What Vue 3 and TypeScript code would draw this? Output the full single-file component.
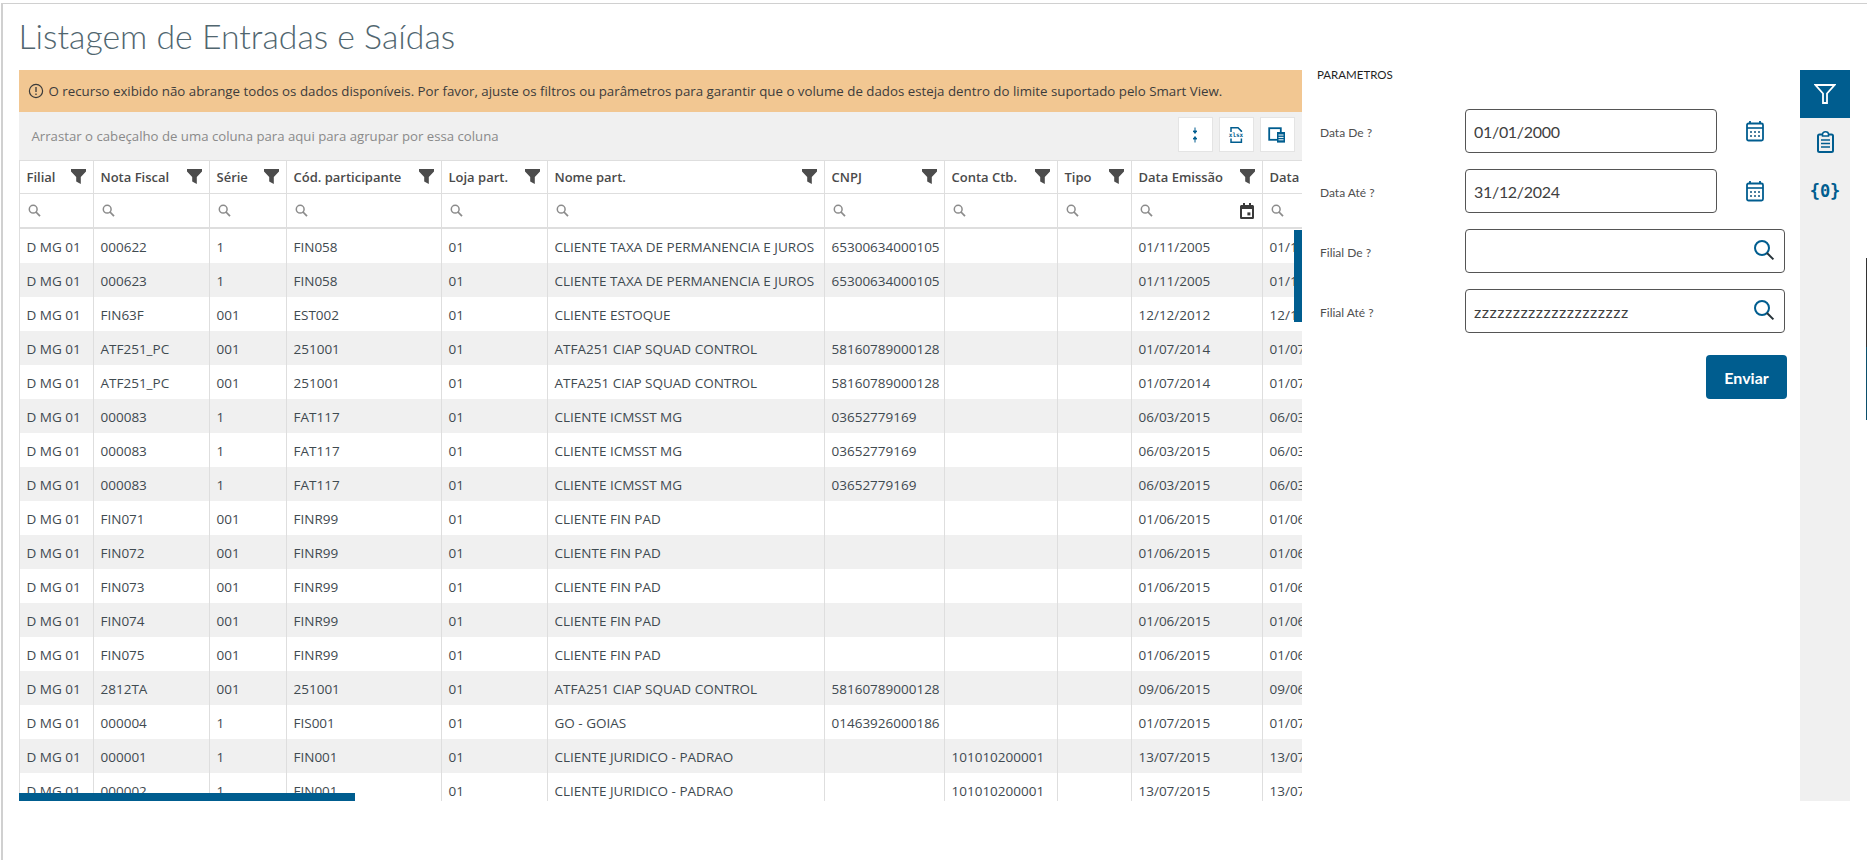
<script setup lang="ts">
interface Col { label: string; width: number; date?: boolean }
const cols: Col[] = [
  { label: 'Filial', width: 75 },
  { label: 'Nota Fiscal', width: 116 },
  { label: 'Série', width: 77 },
  { label: 'Cód. participante', width: 155 },
  { label: 'Loja part.', width: 106 },
  { label: 'Nome part.', width: 277 },
  { label: 'CNPJ', width: 120 },
  { label: 'Conta Ctb.', width: 113 },
  { label: 'Tipo', width: 74 },
  { label: 'Data Emissão', width: 131, date: true },
  { label: 'Data Digitação', width: 131 }
]
const tableWidth = cols.reduce((s, c) => s + c.width, 0)

function row(nf: string, serie: string, cod: string, nome: string, cnpj: string, conta: string, data: string): string[] {
  return ['D MG 01', nf, serie, cod, '01', nome, cnpj, conta, '', data, data]
}
const taxa = 'CLIENTE TAXA DE PERMANENCIA E JUROS'
const ciap = 'ATFA251 CIAP SQUAD CONTROL'
const rows: string[][] = [
  row('000622', '1', 'FIN058', taxa, '65300634000105', '', '01/11/2005'),
  row('000623', '1', 'FIN058', taxa, '65300634000105', '', '01/11/2005'),
  row('FIN63F', '001', 'EST002', 'CLIENTE ESTOQUE', '', '', '12/12/2012'),
  row('ATF251_PC', '001', '251001', ciap, '58160789000128', '', '01/07/2014'),
  row('ATF251_PC', '001', '251001', ciap, '58160789000128', '', '01/07/2014'),
  row('000083', '1', 'FAT117', 'CLIENTE ICMSST MG', '03652779169', '', '06/03/2015'),
  row('000083', '1', 'FAT117', 'CLIENTE ICMSST MG', '03652779169', '', '06/03/2015'),
  row('000083', '1', 'FAT117', 'CLIENTE ICMSST MG', '03652779169', '', '06/03/2015'),
  row('FIN071', '001', 'FINR99', 'CLIENTE FIN PAD', '', '', '01/06/2015'),
  row('FIN072', '001', 'FINR99', 'CLIENTE FIN PAD', '', '', '01/06/2015'),
  row('FIN073', '001', 'FINR99', 'CLIENTE FIN PAD', '', '', '01/06/2015'),
  row('FIN074', '001', 'FINR99', 'CLIENTE FIN PAD', '', '', '01/06/2015'),
  row('FIN075', '001', 'FINR99', 'CLIENTE FIN PAD', '', '', '01/06/2015'),
  row('2812TA', '001', '251001', ciap, '58160789000128', '', '09/06/2015'),
  row('000004', '1', 'FIS001', 'GO - GOIAS', '01463926000186', '', '01/07/2015'),
  row('000001', '1', 'FIN001', 'CLIENTE JURIDICO - PADRAO', '', '101010200001', '13/07/2015'),
  row('000002', '1', 'FIN001', 'CLIENTE JURIDICO - PADRAO', '', '101010200001', '13/07/2015')
]
const params = [
  { label: 'Data De ?', value: '01/01/2000', kind: 'date' },
  { label: 'Data Até ?', value: '31/12/2024', kind: 'date' },
  { label: 'Filial De ?', value: '', kind: 'search' },
  { label: 'Filial Até ?', value: 'zzzzzzzzzzzzzzzzzzzz', kind: 'search' }
]
</script>

<template>
  <div class="page">
    <main class="content">
      <h1 class="title">Listagem de Entradas e Saídas</h1>
      <div class="banner">
        <svg class="info" viewBox="0 0 16 16" width="16" height="16">
          <circle cx="8" cy="8" r="6.6" fill="none" stroke="#3a3a3a" stroke-width="1.2" />
          <path d="M8 4v5M8 10.6v1.4" stroke="#3a3a3a" stroke-width="1.3" fill="none" />
        </svg>
        <span>O recurso exibido não abrange todos os dados disponíveis. Por favor, ajuste os filtros ou parâmetros para garantir que o volume de dados esteja dentro do limite suportado pelo Smart View.</span>
      </div>
      <div class="groupbar">
        <span class="grouphint">Arrastar o cabeçalho de uma coluna para aqui para agrupar por essa coluna</span>
        <div class="tools">
          <button class="tool" type="button" aria-label="Compactar">
            <svg viewBox="0 0 16 18" width="16" height="18">
              <path d="M8 1.500v4M6.200 5 8 7.400 9.800 5ZM8 16.500v-4M6.200 13 8 10.600 9.800 13Z" fill="#005d8f" stroke="#005d8f" stroke-width="1" />
            </svg>
          </button>
          <button class="tool" type="button" aria-label="Exportar">
            <svg viewBox="0 0 18 18" width="18" height="18">
              <path d="M4 6V1.700h7l3.400 3.400V6M4 12.500v3.800h10.400v-3.800" fill="none" stroke="#005d8f" stroke-width="1.500" />
              <text x="9" y="11.400" text-anchor="middle" class="xlsx">xlsx</text>
            </svg>
          </button>
          <button class="tool" type="button" aria-label="Colunas">
            <svg viewBox="0 0 18 18" width="18" height="18">
              <rect x="1.200" y="2.200" width="11.600" height="11.600" fill="none" stroke="#005d8f" stroke-width="1.800" />
              <rect x="9" y="6" width="8" height="10.600" fill="#005d8f" />
              <path d="M10.500 9h5M10.500 11.400h5M10.500 13.800h5" stroke="#fff" stroke-width="1" />
            </svg>
          </button>
        </div>
      </div>
      <div class="grid">
        <table class="table" :style="{ width: tableWidth + 'px' }">
          <colgroup>
            <col v-for="c in cols" :key="c.label" :style="{ width: c.width + 'px' }" />
          </colgroup>
          <thead>
            <tr class="head">
              <th v-for="c in cols" :key="c.label">
                <div class="headcell">
                  <span class="headlabel">{{ c.label }}</span>
                  <svg class="funnel" viewBox="0 0 15 15" width="15" height="15">
                    <path d="M0 0h15v2.600L9.800 8v7L5.200 12.600V8L0 2.600Z" fill="#4c4c4c" />
                  </svg>
                </div>
              </th>
            </tr>
            <tr class="filters">
              <th v-for="c in cols" :key="c.label">
                <div class="filtercell">
                  <svg viewBox="0 0 13 13" width="13" height="13">
                    <circle cx="5.200" cy="5.200" r="3.900" fill="none" stroke="#8b8b8b" stroke-width="1.500" />
                    <path d="m8 8 4 4.200" stroke="#8b8b8b" stroke-width="1.800" fill="none" />
                  </svg>
                  <svg v-if="c.date" class="eventicon" viewBox="0 0 14 16" width="14" height="16">
                    <path d="M3 0h2v2h4V0h2v2h1.400c.9 0 1.600.7 1.600 1.600v10.800c0 .9-.7 1.600-1.600 1.600H1.600C.7 16 0 15.300 0 14.400V3.600C0 2.700.7 2 1.600 2H3ZM2 6v8h10V6Z" fill="#3a3a3a" />
                    <rect x="7.400" y="9.400" width="3" height="3" fill="#3a3a3a" />
                  </svg>
                </div>
              </th>
            </tr>
          </thead>
          <tbody>
            <tr v-for="(r, i) in rows" :key="i" class="datarow">
              <td v-for="(v, j) in r" :key="j">{{ v }}</td>
            </tr>
          </tbody>
        </table>
        <div class="vthumb"></div>
        <div class="hthumb"></div>
      </div>
    </main>

    <section class="params">
      <h2 class="paramstitle">PARAMETROS</h2>
      <form class="form" @submit.prevent>
        <div v-for="p in params" :key="p.label" class="field">
          <label class="fieldlabel">{{ p.label }}</label>
          <div class="control" :class="p.kind">
            <input class="input" type="text" :value="p.value" />
            <svg v-if="p.kind === 'search'" class="lens" viewBox="0 0 22 22" width="22" height="22">
              <circle cx="9" cy="9" r="7" fill="none" stroke="#005d8f" stroke-width="2" />
              <path d="m14 14 6.400 6.400" stroke="#263238" stroke-width="2" fill="none" />
            </svg>
          </div>
          <svg v-if="p.kind === 'date'" class="cal" viewBox="0 0 18 22" width="18" height="22">
            <path d="M4 1v3M14 1v3" stroke="#005d8f" stroke-width="1.800" />
            <rect x="1" y="3.500" width="16" height="17" rx="1.500" fill="none" stroke="#005d8f" stroke-width="1.800" />
            <path d="M1 8h16" stroke="#005d8f" stroke-width="1.600" />
            <path d="M4 11h2v2H4ZM8 11h2v2H8ZM12 11h2v2h-2ZM4 15h2v2H4ZM8 15h2v2H8ZM12 15h2v2h-2Z" fill="#4a7fa0" />
          </svg>
        </div>
        <button class="send" type="submit">Enviar</button>
      </form>
    </section>

    <nav class="rail">
      <div class="railitem active">
        <svg viewBox="0 0 22 20" width="22" height="20">
          <path d="M1.500 1h19L13 9.500V19H9V9.500Z" fill="none" stroke="#fff" stroke-width="1.800" />
        </svg>
      </div>
      <div class="railitem">
        <svg viewBox="0 0 17 22" width="17" height="22">
          <rect x="1" y="3.500" width="15" height="17.500" rx="1.500" fill="none" stroke="#005d8f" stroke-width="2" />
          <path d="M5.500 3.500c0-1.500 1-2.700 3-2.700s3 1.200 3 2.700v1.500h-6Z" fill="#fff" stroke="#005d8f" stroke-width="1.500" />
          <path d="M4 9h9M4 12.500h9M4 16h9" stroke="#005d8f" stroke-width="1.500" />
        </svg>
      </div>
      <div class="railitem code">{0}</div>
    </nav>

    <div class="edge"></div>
  </div>
</template>

<style>
html, body { margin: 0; background: #fff; }
</style>

<style scoped>
.page {
  box-sizing: border-box;
  height: 857px;
  margin: 3px 0 0 1px;
  border-top: 1px solid #d0d0d0;
  border-left: 2px solid #d0d0d0;
  display: flex;
  align-items: flex-start;
  padding-left: 15.500px;
  font-family: "Open Sans", "Liberation Sans", sans-serif;
  color: #3c3c3c;
  position: relative;
  overflow: hidden;
}
.content {
  width: 1283px;
  flex: none;
}
.title {
  margin: 0;
  height: 66px;
  box-sizing: border-box;
  padding: 12px 0 0;
  font-family: Lato, "Noto Sans", sans-serif;
  font-weight: 300;
  font-size: 33.800px;
  line-height: 40px;
  color: #51666f;
}
.banner {
  height: 42px;
  background: #f2c792;
  display: flex;
  align-items: center;
  gap: 5px;
  padding-left: 9px;
  font-size: 13.300px;
  color: #3c3c3c;
  white-space: nowrap;
}
.info { flex: none; }
.groupbar {
  height: 47.500px;
  background: #f0f0f0;
  display: flex;
  align-items: center;
  justify-content: space-between;
  padding: 0 7px 0 13px;
  box-sizing: border-box;
}
.grouphint {
  font-size: 13.200px;
  color: #8a8a8a;
}
.tools {
  display: flex;
  gap: 6px;
  margin-bottom: 2px;
}
.tool {
  width: 35px;
  height: 35px;
  padding: 0;
  background: #fff;
  border: 1px solid #e4e4e4;
  display: flex;
  align-items: center;
  justify-content: center;
}
.xlsx {
  font-family: "DejaVu Sans Mono", monospace;
  font-size: 6px;
  font-weight: 700;
  fill: #005d8f;
}
.grid {
  position: relative;
  height: 641.500px;
  overflow: hidden;
  background: #fff;
}
.table {
  table-layout: fixed;
  border-collapse: separate;
  border-spacing: 0;
  font-size: 13.500px;
}
.table th, .table td {
  box-sizing: border-box;
  padding: 0;
  border-right: 1px solid #dedede;
  text-align: left;
  overflow: hidden;
  white-space: nowrap;
}
.table tr > :first-child { border-left: 1px solid #dedede; }
.head th {
  height: 34px;
  border-top: 1px solid #dedede;
  border-bottom: 1px solid #dedede;
}
.headcell {
  display: flex;
  align-items: center;
  justify-content: space-between;
  padding: 0 7px;
}
.headlabel {
  font-size: 13px;
  font-weight: 600;
  color: #4a4a4a;
}
.funnel { flex: none; }
.filters th {
  height: 35.500px;
  border-bottom: 2px solid #dedede;
}
.filtercell {
  display: flex;
  align-items: center;
  justify-content: space-between;
  padding: 1px 7px 0 8px;
  height: 33px;
  box-sizing: border-box;
}
.eventicon { margin-right: 1px; }
.table .datarow td {
  height: 34px;
  padding: 1px 7px 0;
  color: #3f4a50;
}
.datarow:nth-child(even) td { background: #f0f0f0; }
.vthumb {
  position: absolute;
  top: 70px;
  right: 0;
  width: 8px;
  height: 92px;
  background: #005d8f;
}
.hthumb {
  position: absolute;
  left: 0;
  bottom: 0;
  width: 336px;
  height: 8px;
  background: #005d8f;
}
.params {
  flex: none;
  width: 498.500px;
  box-sizing: border-box;
  padding: 63px 0 0 15.500px;
}
.paramstitle {
  margin: 0 0 26px;
  height: 16px;
  font-family: Lato, "Noto Sans", sans-serif;
  font-size: 11.500px;
  line-height: 16px;
  font-weight: 400;
  color: #1f1f1f;
}
.form {
  display: flex;
  flex-direction: column;
  gap: 16px;
}
.field {
  display: flex;
  align-items: center;
  height: 44px;
}
.fieldlabel {
  flex: none;
  width: 148px;
  box-sizing: border-box;
  padding: 2px 0 0 3px;
  font-family: Lato, "Noto Sans", sans-serif;
  font-size: 12px;
  color: #4f4f4f;
}
.control {
  position: relative;
  flex: none;
}
.control.date { width: 252px; }
.control.search { width: 320px; }
.input {
  box-sizing: border-box;
  width: 100%;
  height: 44px;
  border: 1px solid #555;
  border-radius: 4px;
  padding: 0 8px;
  font-family: Lato, "Noto Sans", sans-serif;
  font-size: 16px;
  letter-spacing: .5px;
  color: #3f3f3f;
  background: #fff;
}
.control.date .input { letter-spacing: -.3px; }
.lens {
  position: absolute;
  right: 10px;
  top: 10px;
}
.cal {
  margin-left: 29px;
  flex: none;
}
.send {
  align-self: flex-start;
  margin: 6px 0 0 389px;
  width: 81px;
  height: 44px;
  border: 0;
  border-radius: 4px;
  background: #005d8f;
  color: #fff;
  font-family: Lato, "Noto Sans", sans-serif;
  font-size: 16px;
  font-weight: 700;
}
.rail {
  flex: none;
  width: 50px;
  height: 731px;
  margin-top: 66px;
  background: #f0f0f0;
}
.railitem {
  height: 48px;
  display: flex;
  align-items: center;
  justify-content: center;
}
.railitem.active { background: #005d8f; }
.code {
  font-family: "DejaVu Sans Mono", monospace;
  font-size: 17px;
  font-weight: 700;
  color: #005d8f;
  height: 50px;
}
.edge {
  position: absolute;
  top: 254px;
  right: 0;
  width: 1px;
  height: 162px;
  background: linear-gradient(#333 0 55%, #0b4f6c 55%);
}
</style>
